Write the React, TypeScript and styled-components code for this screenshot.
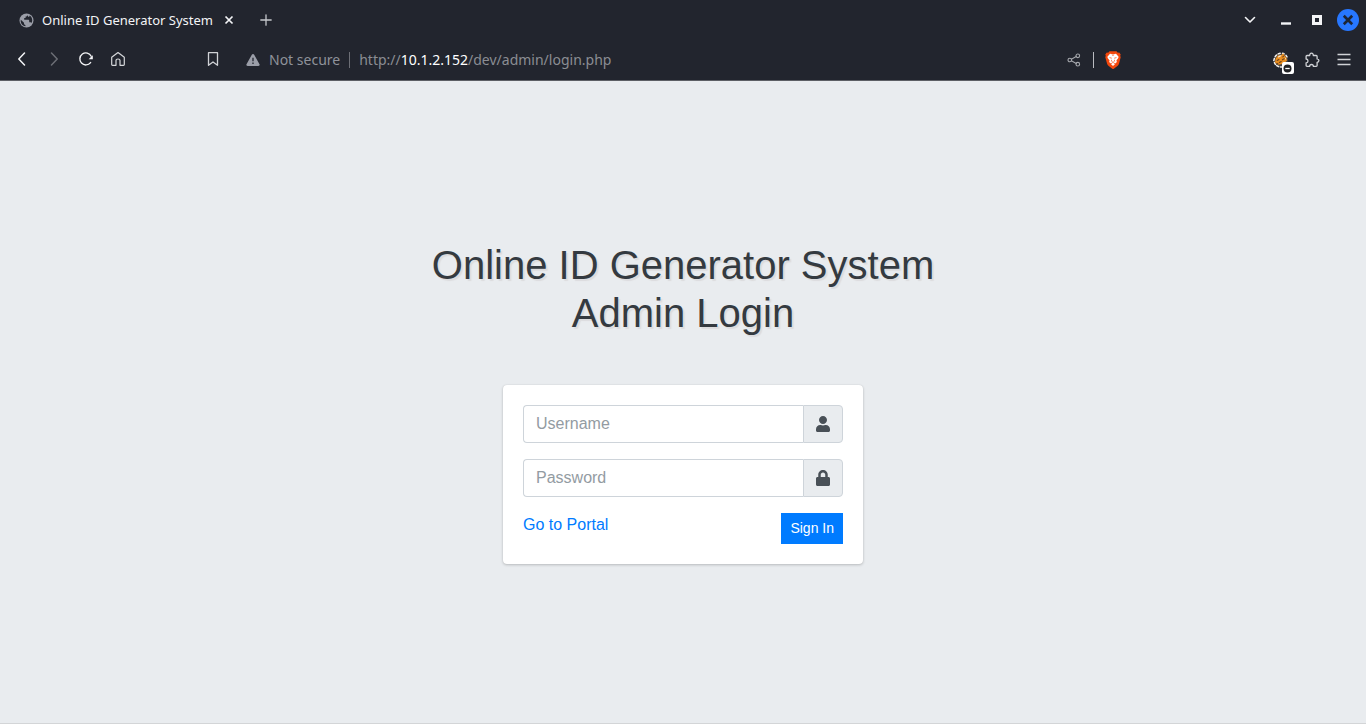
import React from "react";
import styled, { createGlobalStyle } from "styled-components";
import { FaLock, FaUser } from "react-icons/fa";

const GlobalStyle = createGlobalStyle`
  *, *::before, *::after { box-sizing: border-box; }
  body { margin: 0; background: #e9ecef; }
  button { font: inherit; }
`;

const Window = styled.div`
  min-height: 100vh;
  display: flex;
  flex-direction: column;
`;

const Chrome = styled.header`
  background: #22252e;
  border-bottom: 1px solid #5d5f65;
  color: #f3f4f6;
  font-family: "Noto Sans", sans-serif;
`;

const TabStrip = styled.div`
  height: 40px;
  display: flex;
  align-items: center;
  padding: 0 3px 0 8px;
`;

const Tab = styled.div`
  display: flex;
  align-items: center;
  height: 32px;
  padding: 0 0 0 11px;
  gap: 8px;
  border-radius: 8px;
  font-size: 13px;
  line-height: 20px;
  white-space: nowrap;
`;

const IconButton = styled.button<{ $width?: number; $color?: string }>`
  display: flex;
  align-items: center;
  justify-content: center;
  flex: none;
  width: ${(p) => p.$width ?? 32}px;
  height: 32px;
  padding: 0;
  border: 0;
  background: transparent;
  color: ${(p) => p.$color ?? "#f3f4f6"};
`;

const NewTab = styled(IconButton)`
  margin-left: 13px;
`;

const WindowControls = styled.div`
  display: flex;
  align-items: center;
  margin-left: auto;
`;

const WindowMenu = styled(IconButton)`
  margin-right: 4px;
`;

const CloseDisc = styled.span`
  display: flex;
  align-items: center;
  justify-content: center;
  width: 22px;
  height: 22px;
  border-radius: 50%;
  background: #2777ff;
  color: #1c2536;
`;

const Toolbar = styled.nav`
  height: 40px;
  display: flex;
  align-items: center;
  padding: 0 6px;
`;

const Navigation = styled.div`
  display: flex;
  flex: none;
`;

const AddressBar = styled.div`
  display: flex;
  align-items: center;
  flex: 1;
  min-width: 0;
  margin: 0 139px 0 63px;
  font-size: 14px;
  line-height: 20px;
  color: #8b8d93;
  white-space: nowrap;
`;

const SecurityButton = styled.button`
  display: flex;
  align-items: center;
  gap: 9px;
  height: 24px;
  margin: 0 2px 0 17px;
  padding: 0;
  border: 0;
  background: transparent;
  color: #8f929a;
`;

const Divider = styled.span<{ $gap: number; $color: string }>`
  flex: none;
  width: 1px;
  height: 16px;
  margin: 0 ${(p) => p.$gap}px 0 7px;
  background: ${(p) => p.$color};
`;

const Url = styled.span`
  flex: 1;
  min-width: 0;
  overflow: hidden;
`;

const Host = styled.span`
  color: #ffffff;
`;

const Page = styled.main`
  flex: 1;
  display: flex;
  flex-direction: column;
  align-items: center;
  justify-content: center;
  padding-bottom: 48px;
  background: #e9ecef;
  border-bottom: 1px solid #d3d5d7;
  font-family: "Liberation Sans", Arial, sans-serif;
  font-size: 16px;
  line-height: 24px;
`;

const Title = styled.h1`
  margin: 0;
  padding: 48px 0;
  font-size: 40px;
  font-weight: 400;
  line-height: 48px;
  text-align: center;
  color: #343a40;
  text-shadow: 2px 2px 1px #dcdcde;
`;

const Card = styled.form`
  width: 360px;
  max-width: 90%;
  padding: 20px;
  border-radius: 4px;
  background: #ffffff;
  box-shadow: 0 0 1px rgba(0, 0, 0, 0.125), 0 1px 3px rgba(0, 0, 0, 0.2);
`;

const Field = styled.div`
  display: flex;
  height: 38px;
  margin-bottom: 16px;
`;

const TextInput = styled.input`
  flex: 1;
  min-width: 0;
  padding: 6px 12px;
  border: 1px solid #ced4da;
  border-right: 0;
  border-radius: 4px 0 0 4px;
  background: #ffffff;
  color: #495057;
  font: inherit;
  outline: 0;

  &::placeholder {
    color: #939ba2;
    opacity: 1;
  }
`;

const FieldIcon = styled.label`
  display: flex;
  align-items: center;
  justify-content: center;
  width: 40px;
  border: 1px solid #ced4da;
  border-radius: 0 4px 4px 0;
  background: #e9ecef;
  color: #495057;
`;

const Actions = styled.div`
  display: flex;
  align-items: flex-start;
  justify-content: space-between;
`;

const PortalLink = styled.a`
  color: #007bff;
  text-decoration: none;
`;

const SignIn = styled.button`
  padding: 4px 8px;
  border: 1px solid #007bff;
  background: #007bff;
  color: #ffffff;
  font-size: 14px;
  line-height: 21px;
`;

const stroke = {
  fill: "none",
  stroke: "currentColor",
  strokeLinecap: "round" as const,
  strokeLinejoin: "round" as const,
};

const Globe = () => (
  <svg width="15" height="15" viewBox="0 0 15 15" aria-hidden="true">
    <circle cx="7.5" cy="7.5" r="7" fill="#9b9ea8" />
    <path
      d="M8.6 1.9c-.2 1-.9 1.6-2 1.7v1.5H5.2v1.6h4c.7 0 1 .4 1 1v1.6h1.2c.6 0 1 .3 1.2.8 1.3-2.6.7-6.1-1.8-7.6-.2 1-.9 1.5-1.7 1.3z"
      fill="#22252e"
    />
    <path d="M1.8 6.7 5 9.8v.8c0 .8.5 1.4 1.4 1.4v1.3C3.3 12.9 1.2 9.9 1.8 6.7z" fill="#22252e" />
  </svg>
);

const Cross = ({ size, width }: { size: number; width: number }) => (
  <svg width={size} height={size} viewBox="0 0 10 10" aria-hidden="true">
    <path d="M1.5 1.5l7 7M8.5 1.5l-7 7" {...stroke} strokeLinecap="butt" strokeWidth={width} />
  </svg>
);

const Plus = () => (
  <svg width="12" height="12" viewBox="0 0 12 12" aria-hidden="true">
    <path d="M6 .8v10.4M.8 6h10.4" {...stroke} strokeWidth="1.3" />
  </svg>
);

const Arrow = ({ d }: { d: string }) => (
  <svg width="14" height="16" viewBox="0 0 14 16" aria-hidden="true">
    <path d={d} {...stroke} strokeWidth="1.5" />
  </svg>
);

const Reload = () => (
  <svg width="16" height="18" viewBox="0 0 16 18" aria-hidden="true">
    <path d="M12.6 11.6A6 6 0 1 1 13.2 5.2" {...stroke} strokeWidth="1.4" />
    <path d="M14.8 4.2v4.1h-4.2z" fill="currentColor" />
  </svg>
);

const Home = () => (
  <svg width="16" height="18" viewBox="0 0 16 18" aria-hidden="true">
    <path
      d="M1.7 6.3 8 1.5l6.3 4.8v7.2c0 .5-.3.8-.8.8H10V9.4C10 8.6 9.3 8 8 8s-2 .6-2 1.4v4.9H2.5c-.5 0-.8-.3-.8-.8z"
      {...stroke}
      strokeWidth="1.2"
    />
  </svg>
);

const Bookmark = () => (
  <svg width="12" height="16" viewBox="0 0 12 16" aria-hidden="true">
    <path d="M1.5.7h9v12.6L6 9.9l-4.5 3.4z" {...stroke} strokeWidth="1.3" />
  </svg>
);

const Warning = () => (
  <svg width="14" height="14" viewBox="0 0 14 14" aria-hidden="true">
    <path d="M5.8 1.7c.5-.9 1.9-.9 2.4 0l5.3 9.5c.5.9-.1 1.8-1.1 1.8H1.6C.6 13 0 12.1.5 11.2z" fill="#9b9ea8" />
    <path d="M7 4.8v3.5M7 9.6v1.5" stroke="#22252e" strokeWidth="1.3" />
  </svg>
);

const Share = () => (
  <svg width="14" height="14" viewBox="0 0 14 14" aria-hidden="true">
    <g {...stroke} strokeWidth="1.1">
      <circle cx="2.8" cy="7" r="1.8" />
      <circle cx="10.8" cy="2.8" r="1.8" />
      <circle cx="10.8" cy="11.2" r="1.8" />
      <path d="m4.4 6.2 4.8-2.6M4.4 7.8l4.8 2.6" />
    </g>
  </svg>
);

const BraveLion = () => (
  <svg width="16" height="18" viewBox="0 0 16 18" aria-hidden="true">
    <path
      d="M4.5.2h7l1.3 1.5 1.4-.1 1.5 1.8-.5 1.4.5 1.4-1.7 6.6c-.3 1-.8 1.7-1.6 2.3L8.8 17.7c-.5.3-1 .3-1.5 0l-3.6-2.6c-.8-.6-1.3-1.3-1.6-2.3L.3 6.2l.5-1.4-.5-1.4 1.5-1.8 1.4.1z"
      fill="#f4480c"
    />
    <path
      d="M5 2.8 8 3.3l3-.5 2.6 2.9-.3 1.2-1.9 2.5.5 1.7-1.7 1.5-.8-.5L8 13.2l-1.4-1.1-.8.5-1.7-1.5.5-1.7-1.9-2.5-.3-1.2z"
      fill="#fff"
    />
    <path d="m5.9 13.1 2.1-.8 2.1.8L8 14.9z" fill="#fff" />
    <path d="m3.7 6.2 3 .5-.3 1zM12.3 6.2l-3 .5.3 1zM6.5 8.2l.4 1.8-1.1.8M9.5 8.2l-.4 1.8 1.1.8M6.4 3.8 8 4.8l1.6-1M6.5 10.9l1.5.8 1.5-.8-1.5-.5z" fill="#f4480c" />
  </svg>
);

const FoxyExtension = () => (
  <svg width="28" height="28" viewBox="-7 -6 28 28" aria-hidden="true">
    <circle cx="8" cy="8" r="7" fill="#4a4643" />
    <path
      d="m.8 8.6.5-2M2.2 4.6l1.3-1.5M5.2 1.9l2-.7M9.6 1.3l1.4.4M13 3.4l1 1.5M1.4 10.6l1 1.9M3.7 13.6l1.9 1.1M7.4 15h1.4"
      {...stroke}
      stroke="#f5f2ee"
      strokeWidth="1.5"
    />
    <path d="m2 10.4.6-3.6 2.2-3.2 3.6-.7 2-1.6.8 2 2.2 2.1.6 3.2-2.1 1.8-2.6 1.7-3.9.6z" fill="#e98d1e" />
    <path d="m5.4 3.9 3.2-.8-.9 1.5-2.8 1.1zM11.7 5.6l1.5 1.2-.7.9z" fill="#f6ead8" />
    <path d="m4.2 8.4 1.7-.9M6.4 10.5l1.8-1M9.4 7.8l1.7-1.1M9.8 4.9l.8-.7M3.9 11.3l1 .4" {...stroke} stroke="#70441c" strokeWidth="1.1" />
    <rect x="9" y="10" width="12" height="12" rx="2" fill="#fff" />
    <circle cx="14.5" cy="16.5" r="4" fill="#202124" />
    <path d="M12.3 16.5h4.4" stroke="#fff" strokeWidth="1.3" />
  </svg>
);

const Puzzle = () => (
  <svg width="16" height="16" viewBox="0 0 16 16" aria-hidden="true">
    <path
      d="M3 3.5h2.7C5.6 2 6.3 1.2 7.5 1.2S9.4 2 9.3 3.5h2.9c.6 0 .9.3.9.9v2.5c1.2.1 1.8.7 1.8 1.7s-.6 1.6-1.8 1.7v3.3c0 .5-.3.8-.9.8H9.4c0-1.2-.7-1.9-1.9-1.9s-1.9.7-1.9 1.9H3c-.5 0-.9-.3-.9-.8v-2.8c1.2-.1 1.9-.8 1.9-1.9S3.3 7.1 2.1 7V4.4c0-.6.4-.9.9-.9z"
      {...stroke}
      strokeWidth="1.3"
    />
  </svg>
);

const Menu = () => (
  <svg width="14" height="14" viewBox="0 0 14 14" aria-hidden="true">
    <path d="M.5 1.5h13M.5 6.5h13M.5 11.5h13" stroke="currentColor" strokeWidth="1.3" />
  </svg>
);

export default function App() {
  return (
    <Window>
      <GlobalStyle />
      <Chrome>
        <TabStrip>
          <Tab>
            <Globe />
            <span>Online ID Generator System</span>
            <IconButton $width={16} aria-label="Close tab"><Cross size={10} width={1.7} /></IconButton>
          </Tab>
          <NewTab aria-label="New tab" $color="#c5c7cb"><Plus /></NewTab>
          <WindowControls>
            <WindowMenu aria-label="Search tabs">
              <svg width="12" height="8" viewBox="0 0 12 8" aria-hidden="true">
                <path d="m1.5 1.5 4.5 4.5 4.5-4.5" {...stroke} strokeWidth="1.6" />
              </svg>
            </WindowMenu>
            <IconButton $width={31} aria-label="Minimize">
              <svg width="10" height="10" viewBox="0 0 10 10" aria-hidden="true">
                <path d="M0 8.5h10" stroke="currentColor" strokeWidth="2.4" />
              </svg>
            </IconButton>
            <IconButton $width={31} aria-label="Maximize">
              <svg width="10" height="10" viewBox="0 0 10 10" aria-hidden="true">
                <path d="M1.5 1.5h7v7h-7z" fill="none" stroke="currentColor" strokeWidth="3" />
              </svg>
            </IconButton>
            <IconButton $width={31} aria-label="Close window">
              <CloseDisc><Cross size={12} width={2.2} /></CloseDisc>
            </IconButton>
          </WindowControls>
        </TabStrip>
        <Toolbar aria-label="Browser toolbar">
          <Navigation>
            <IconButton aria-label="Back"><Arrow d="M9.5 1 3.8 7l5.7 6" /></IconButton>
            <IconButton aria-label="Forward" $color="#6c6e75"><Arrow d="m4.5 1 5.7 6-5.7 6" /></IconButton>
            <IconButton aria-label="Reload"><Reload /></IconButton>
            <IconButton aria-label="Home" $color="#d5d7da"><Home /></IconButton>
          </Navigation>
          <AddressBar>
            <IconButton aria-label="Bookmark this page" $color="#d0d2d6"><Bookmark /></IconButton>
            <SecurityButton><Warning />Not secure</SecurityButton>
            <Divider $gap={9} $color="#6c6e75" />
            <Url>http://<Host>10.1.2.152</Host>/dev/admin/login.php</Url>
            <IconButton $width={24} aria-label="Share" $color="#a6a8ad"><Share /></IconButton>
            <Divider $gap={7} $color="#b9bbc0" />
            <IconButton $width={24} aria-label="Brave Shields"><BraveLion /></IconButton>
          </AddressBar>
          <IconButton aria-label="Proxy extension"><FoxyExtension /></IconButton>
          <IconButton aria-label="Extensions" $color="#d0d2d6"><Puzzle /></IconButton>
          <IconButton aria-label="Menu" $color="#d0d2d6"><Menu /></IconButton>
        </Toolbar>
      </Chrome>
      <Page>
        <Title>Online ID Generator System<br />Admin Login</Title>
        <Card>
          <Field>
            <TextInput id="username" type="text" placeholder="Username" />
            <FieldIcon htmlFor="username" aria-label="Username"><FaUser size={16} /></FieldIcon>
          </Field>
          <Field>
            <TextInput id="password" type="password" placeholder="Password" />
            <FieldIcon htmlFor="password" aria-label="Password"><FaLock size={16} /></FieldIcon>
          </Field>
          <Actions>
            <PortalLink href="#portal">Go to Portal</PortalLink>
            <SignIn type="submit">Sign In</SignIn>
          </Actions>
        </Card>
      </Page>
    </Window>
  );
}
